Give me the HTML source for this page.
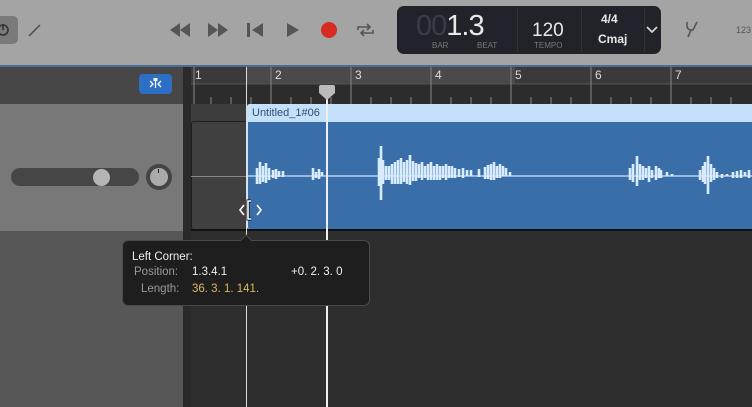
<!DOCTYPE html>
<html><head><style>
*{margin:0;padding:0;box-sizing:border-box}
body{width:752px;height:407px;overflow:hidden;background:#2e2e2e;font-family:"Liberation Sans",sans-serif;position:relative}
.a{position:absolute}
</style></head><body>
<div class="a" style="left:0;top:0;width:752px;height:66px;background:#a4a4a4"></div>
<div class="a" style="left:0;top:65px;width:752px;height:2px;background:#4c6d93"></div>
<div class="a" style="left:-4px;top:16px;width:22px;height:28px;border-radius:5px;background:#7a7a7a"></div>
<svg class="a" style="left:0;top:0" width="752" height="66">
 <g stroke="#333" stroke-width="1.6" fill="none"><circle cx="3" cy="30" r="5"/><line x1="3" y1="24" x2="3" y2="30"/></g>
 <line x1="29" y1="36" x2="40" y2="25" stroke="#555" stroke-width="1.6"/>
 <g fill="#555">
 <polygon points="170,30 180,23 180,37"/><polygon points="180,30 190,23 190,37"/>
 <polygon points="218,23 218,37 228,30"/><polygon points="208,23 208,37 218,30"/>
 <rect x="247" y="23" width="3" height="14"/><polygon points="263,23 263,37 252,30"/>
 <polygon points="287,23 287,37 299,30"/>
 </g>
 <circle cx="329" cy="30" r="8" fill="#d72b23"/>
 <g stroke="#555" stroke-width="1.6" fill="none"><path d="M358 30v-3h12M367 24l3 3-3 3M373 30v3h-12M364 36l-3-3 3-3"/></g>
 <path d="M687 22v4a4 4 0 0 0 4 4h2l4-8M691 30l-3 7" stroke="#555" stroke-width="1.6" fill="none"/>
</svg>
<div class="a" style="left:397px;top:6px;width:264px;height:48px;border-radius:7px;background:#22232a"></div>
<div class="a" style="left:416px;top:10px;font-size:29px;color:#3a3c44;letter-spacing:-1px">00<span style="color:#e8e8e8">1.3</span></div>
<div class="a" style="left:432px;top:41px;font-size:8px;color:#777">BAR</div>
<div class="a" style="left:477px;top:41px;font-size:8px;color:#777">BEAT</div>
<div class="a" style="left:517px;top:8px;width:1px;height:44px;background:#333"></div>
<div class="a" style="left:532px;top:20px;font-size:19px;color:#e8e8e8">120</div>
<div class="a" style="left:534px;top:41px;font-size:8px;color:#777">TEMPO</div>
<div class="a" style="left:581px;top:8px;width:1px;height:44px;background:#333"></div>
<div class="a" style="left:601px;top:12px;font-size:12px;color:#e8e8e8;font-weight:bold">4/4</div>
<div class="a" style="left:598px;top:32px;font-size:12px;color:#e8e8e8;font-weight:bold">Cmaj</div>
<div class="a" style="left:644px;top:8px;width:1px;height:44px;background:#333"></div>
<svg class="a" style="left:646px;top:26px" width="12" height="8"><path d="M1 1l5 5 5-5" stroke="#ddd" stroke-width="1.6" fill="none"/></svg>
<div class="a" style="left:736px;top:25px;font-size:9px;color:#555">123</div>
<div class="a" style="left:0;top:67px;width:183px;height:37px;background:#474747"></div>
<div class="a" style="left:139px;top:74px;width:33px;height:20px;border-radius:4px;background:#2e6fc6"></div>
<svg class="a" style="left:139px;top:74px" width="33" height="20"><path d="M11 7l3 3-3 3M22 7l-3 3 3 3M16.5 6v8" stroke="#fff" stroke-width="1.3" fill="none"/><rect x="14.5" y="4" width="4" height="3" fill="#fff"/></svg>
<div class="a" style="left:0;top:104px;width:183px;height:127px;background:#787878"></div>
<div class="a" style="left:11px;top:168px;width:128px;height:18px;border-radius:9px;background:#464646"></div>
<div class="a" style="left:93px;top:169px;width:17px;height:17px;border-radius:50%;background:#b5b5b5"></div>
<div class="a" style="left:146px;top:164px;width:26px;height:26px;border-radius:50%;background:#444"></div>
<div class="a" style="left:150px;top:168px;width:18px;height:18px;border-radius:50%;background:#aaa"></div>
<div class="a" style="left:158px;top:169px;width:1px;height:4px;background:#222"></div>
<div class="a" style="left:0;top:231px;width:183px;height:176px;background:#575757"></div>
<div class="a" style="left:183px;top:67px;width:8px;height:340px;background:#2a2a2a"></div>
<div class="a" style="left:191px;top:67px;width:561px;height:17px;background:#3a3a3a"></div>
<div class="a" style="left:246px;top:67px;width:269px;height:17px;background:#4a4a4a"></div>
<div class="a" style="left:191px;top:84px;width:561px;height:20px;background:#2c2c2c"></div>
<svg class="a" style="left:191px;top:67px" width="561" height="37">
<g stroke="#555"><line x1="0" y1="17" x2="561" y2="17"/></g>
<g stroke="#888" stroke-width="1">
<path d="M80 0v37M160 0v37M240 0v37M320 0v37M400 0v37M480 0v37M3 0v37"/>
<path d="M20 30v7M40 30v7M60 30v7M100 30v7M120 30v7M140 30v7M180 30v7M200 30v7M220 30v7M260 30v7M280 30v7M300 30v7M340 30v7M360 30v7M380 30v7M420 30v7M440 30v7M460 30v7M500 30v7M520 30v7M540 30v7"/>
</g>
<g fill="#ddd" font-size="12" font-family="Liberation Sans"><text x="4" y="12">1</text><text x="84" y="12">2</text><text x="164" y="12">3</text><text x="244" y="12">4</text><text x="324" y="12">5</text><text x="404" y="12">6</text><text x="484" y="12">7</text></g>
</svg>
<div class="a" style="left:191px;top:104px;width:561px;height:127px;background:#3c3c3c"></div>
<div class="a" style="left:191px;top:121px;width:58px;height:109px;border:1px solid #1e1e1e;border-radius:3px;background:#404040"></div>
<div class="a" style="left:191px;top:176px;width:56px;height:1px;background:#888"></div>
<div class="a" style="left:247px;top:104px;width:505px;height:126px;background:#3a6ea8;border-radius:3px 0 0 3px;border-left:1px solid #cfe6ff"></div>
<div class="a" style="left:247px;top:104px;width:505px;height:18px;background:#c5e0fb;border-radius:3px 0 0 0"></div>
<div class="a" style="left:252px;top:107px;font-size:11px;color:#2d4f75">Untitled_1#06</div>
<div class="a" style="left:191px;top:229px;width:561px;height:2px;background:#111"></div>
<svg class="a" style="left:247px;top:122px" width="505" height="108">
<line x1="0" y1="54" x2="505" y2="54" stroke="#cfe5fb" stroke-width="1.3"/>
<g stroke="#d8ebff" stroke-width="2.6">
<path d="M10 46v16M13 40v22M16 44v16M19 41v20M22 46v12M26 48v8M29 47v10M32 49v6M36 49v6M66 46v12M69 50v6M72 47v10M75 50v4"/>
<path d="M132 36v28M134 24v54M136 38v24M139 44v14M142 44v14M145 42v20M148 40v22M151 38v24M154 36v26M157 40v20M160 38v24M163 33v30M166 39v20M169 41v18M172 42v14M175 40v18M178 44v12M181 42v16M184 40v18M187 44v14M190 42v16M193 44v14M196 44v12M199 42v16M202 44v12M205 44v12M208 46v10M212 47v8M216 46v10M220 48v6M224 48v6M232 47v8M238 45v12M241 43v14M244 42v16M247 40v18M250 44v12M253 42v14M256 44v10M259 46v8M263 50v4"/>
<path d="M383 46v12M386 42v18M390 34v30M393 42v16M396 44v14M399 46v10M402 44v16M405 48v8M409 44v14M412 46v10M414 48v8M420 50v4M425 52v2"/>
<path d="M453 48v10M456 44v16M458 40v22M461 34v38M464 42v18M467 46v12M470 50v6M475 52v4M480 52v2M486 50v6M490 49v7M494 48v8M498 50v4M502 48v8"/>
</g>
</svg>
<div class="a" style="left:326px;top:88px;width:2px;height:319px;background:#eee"></div>
<svg class="a" style="left:318px;top:84px" width="18" height="18"><path d="M1 3a2 2 0 0 1 2-2h12a2 2 0 0 1 2 2v6l-8 7-8-7z" fill="#bbb"/></svg>
<div class="a" style="left:246px;top:67px;width:1px;height:340px;background:#ddd"></div>
<svg class="a" style="left:238px;top:199px" width="24" height="22"><g stroke="#fff" stroke-width="1.6" fill="none"><path d="M6 6l-4 5 4 5M19 6l4 5-4 5"/><path d="M13 2h-3v18h3" stroke="#000" stroke-width="3"/><path d="M13 2h-3v18h3"/></g></svg>
<div class="a" style="left:122px;top:240px;width:248px;height:66px;background:#1e1e1e;border:1px solid #4a4a4a;border-radius:6px"></div>
<div class="a" style="left:242px;top:236px;width:8px;height:8px;background:#1e1e1e;border-left:1px solid #4a4a4a;border-top:1px solid #4a4a4a;transform:rotate(45deg)"></div>
<div class="a" style="left:132px;top:251px;font-size:11.5px;color:#eee">Left Corner:</div>
<div class="a" style="left:134px;top:266px;font-size:11.5px;color:#999">Position:</div>
<div class="a" style="left:192px;top:266px;font-size:11.5px;color:#eee">1.3.4.1</div>
<div class="a" style="left:291px;top:266px;font-size:11.5px;color:#eee">+0. 2. 3. 0</div>
<div class="a" style="left:141px;top:283px;font-size:11.5px;color:#999">Length:</div>
<div class="a" style="left:192px;top:283px;font-size:11.5px;color:#d9b860">36. 3. 1. 141.</div>
</body></html>
